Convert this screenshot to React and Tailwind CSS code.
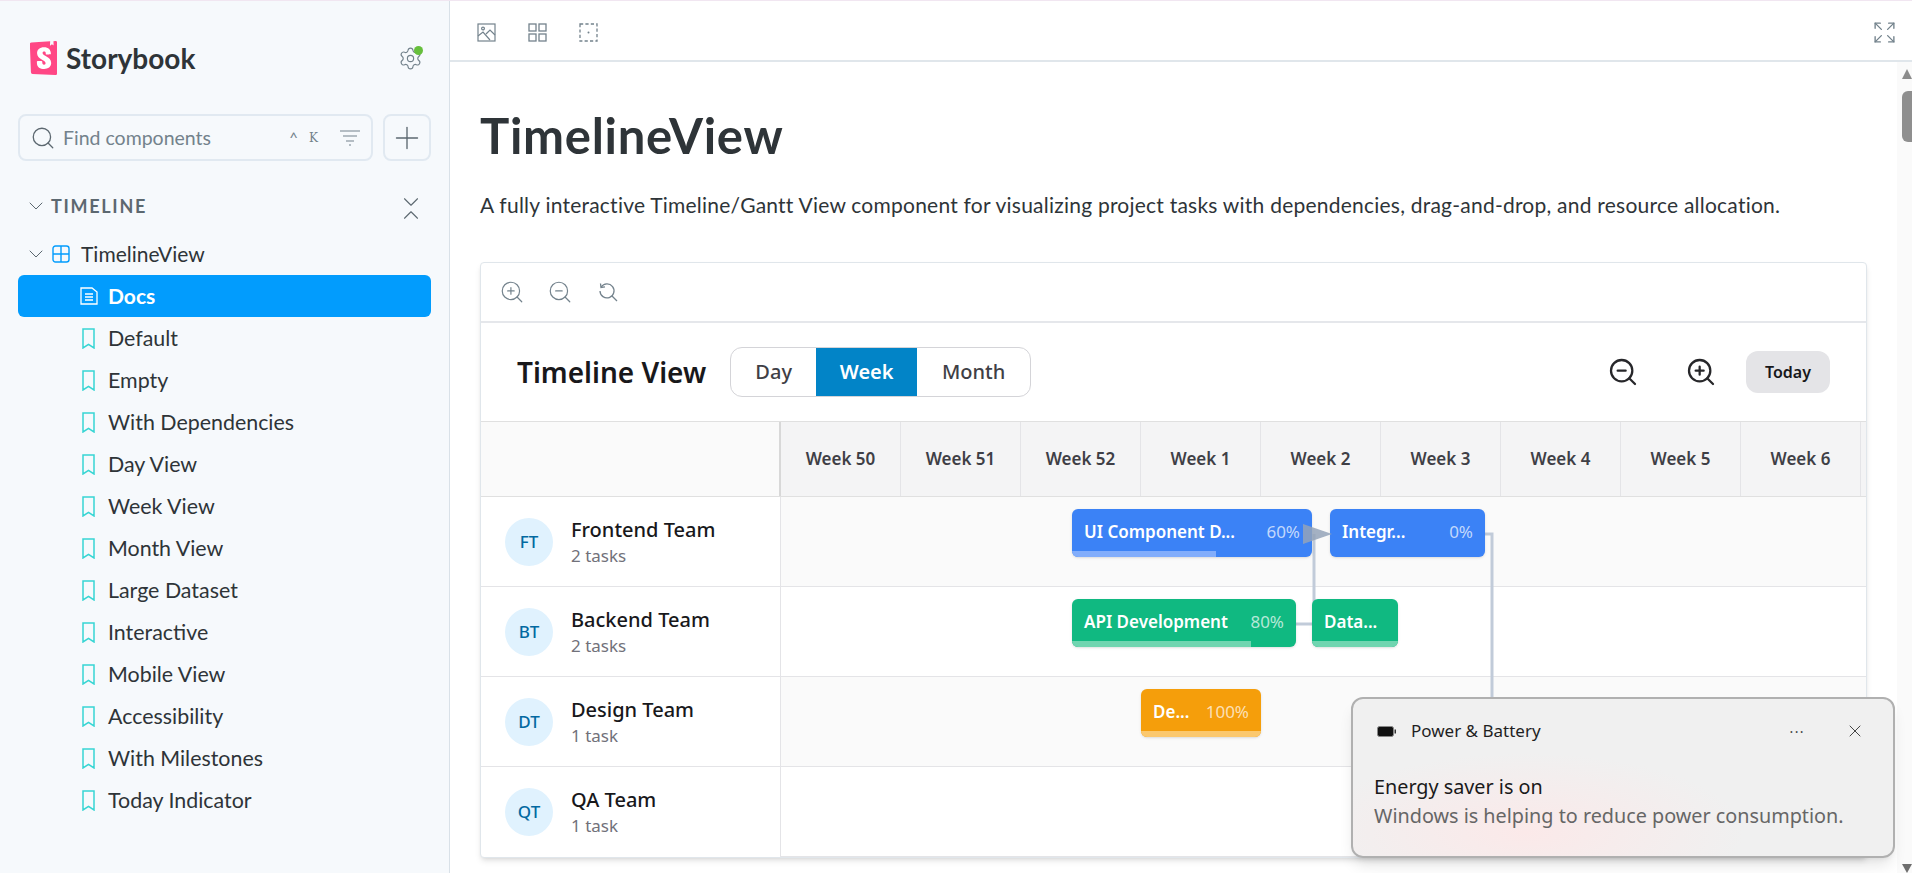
import React from 'react'
import { ChevronDown, ChevronUp, Expand, Plus, Search, Settings, X, ZoomIn, ZoomOut } from 'lucide-react'

const stories = ['Default', 'Empty', 'With Dependencies', 'Day View', 'Week View', 'Month View', 'Large Dataset', 'Interactive', 'Mobile View', 'Accessibility', 'With Milestones', 'Today Indicator']
const weeks = ['Week 50', 'Week 51', 'Week 52', 'Week 1', 'Week 2', 'Week 3', 'Week 4', 'Week 5', 'Week 6', '']

const teams = [
  { initials: 'FT', name: 'Frontend Team', tasks: '2 tasks', bg: 'bg-[#fafafa]' },
  { initials: 'BT', name: 'Backend Team', tasks: '2 tasks', bg: 'bg-white' },
  { initials: 'DT', name: 'Design Team', tasks: '1 task', bg: 'bg-[#fafafa]' },
  { initials: 'QT', name: 'QA Team', tasks: '1 task', bg: 'bg-white' },
]

const Logo = () => (
  <svg viewBox="3 0 18 24" className="w-[27px] h-[34px] shrink-0">
    <rect x="6" y="3" width="12" height="18" fill="#fff" />
    <path fill="#FF4785" d="M16.71.243l-.12 2.71a.18.18 0 00.29.15l1.06-.8.9.7a.18.18 0 00.28-.14l-.1-2.76 1.33-.1a1.2 1.2 0 011.279 1.2v21.596a1.2 1.2 0 01-1.26 1.2l-16.096-.72a1.2 1.2 0 01-1.15-1.16l-.75-19.797a1.2 1.2 0 011.13-1.27L16.7.222zM13.64 9.3c0 .47 3.16.24 3.59-.08 0-3.2-1.72-4.89-4.859-4.89-3.15 0-4.899 1.72-4.899 4.29 0 4.45 5.999 4.53 5.999 6.959 0 .7-.32 1.1-1.05 1.1-.96 0-1.35-.49-1.3-2.16 0-.36-3.649-.48-3.769 0-.27 4.03 2.23 5.2 5.099 5.2 2.79 0 4.969-1.49 4.969-4.18 0-4.77-6.099-4.64-6.099-6.999 0-.97.72-1.1 1.13-1.1.45 0 1.25.07 1.19 1.87z" />
  </svg>
)

const BookmarkIcon = () => (
  <svg viewBox="0 0 13 21" className="w-[13px] h-[21px] shrink-0" fill="none" stroke="#37d5d3" strokeWidth="1.5">
    <path d="M1 1h11v19l-5.5-3.6L1 20z" />
  </svg>
)

const DocIcon = () => (
  <svg viewBox="0 0 18 18" className="w-[18px] h-[18px] shrink-0" fill="none" stroke="#fff" strokeWidth="1.3">
    <path d="M1 1h11l5 4v12H1z" />
    <path d="M5 7h8M5 10h8M5 13h8" />
  </svg>
)

const ComponentIcon = () => (
  <svg viewBox="0 0 18 18" className="w-[18px] h-[18px] shrink-0" fill="none" stroke="#029cfd" strokeWidth="1.4">
    <rect x="1" y="1" width="16" height="16" rx="2.5" />
    <path d="M9 1v16M1 9h16" />
  </svg>
)

const FilterIcon = () => (
  <svg viewBox="0 0 20 16" className="w-[20px] h-[16px]" fill="none" stroke="#73828c" strokeWidth="1.2">
    <path d="M0 1h20M3 6h14M6 11h8M9 15h2" />
  </svg>
)

const ImageIcon = () => (
  <svg viewBox="0 0 19 19" className="w-[19px] h-[19px]" fill="none" stroke="#73828c" strokeWidth="1.2">
    <rect x="1" y="1" width="17" height="17" />
    <circle cx="6" cy="5.5" r="1.4" />
    <path d="M1 13l5-4 7 8M9 11l4-4 5 5" />
  </svg>
)

const GridIcon = () => (
  <svg viewBox="0 0 19 19" className="w-[19px] h-[19px]" fill="none" stroke="#73828c" strokeWidth="1.3">
    <rect x="1" y="1" width="7" height="7" />
    <rect x="11" y="1" width="7" height="7" />
    <rect x="1" y="11" width="7" height="7" />
    <rect x="11" y="11" width="7" height="7" />
  </svg>
)

const OutlineIcon = () => (
  <svg viewBox="0 0 19 19" className="w-[19px] h-[19px]" fill="none" stroke="#73828c" strokeWidth="1.3">
    <rect x="1" y="1" width="17" height="17" strokeDasharray="3.2 2.2" />
    <circle cx="9.5" cy="9.5" r="1" fill="#73828c" stroke="none" />
  </svg>
)

const ResetIcon = () => (
  <svg viewBox="-3 -3 26 26" className="w-[26px] h-[26px]" fill="none" stroke="#73828c" strokeWidth="1.3">
    <path d="M3.2 5A7 7 0 1 1 2 9" />
    <path d="M2.5 1.5l.5 4 4-.6M14 14l5 5" />
  </svg>
)

const BatteryIcon = () => (
  <svg viewBox="0 0 20 11" className="w-[20px] h-[11px]">
    <rect x="0.5" y="0.5" width="16" height="10" rx="2" fill="#111" stroke="#888" />
    <rect x="17.5" y="3.5" width="1.5" height="4" fill="#333" />
  </svg>
)

const Sidebar = () => (
  <aside className="w-[450px] h-full shrink-0 bg-[#f6f9fc] border-r border-[#d9e1e8] px-[18px] pt-[40px] font-['Lato',sans-serif]">
    <div className="flex items-center h-[34px] pl-[12px]">
      <Logo />
      <span className="ml-[9px] font-bold text-[28px] text-[#2e3438]">Storybook</span>
      <div className="relative ml-auto mr-[8px] w-[25px] h-[25px]">
        <Settings size={25} strokeWidth={1.1} className="text-[#73828c]" />
        <span className="absolute top-0 left-[16px] w-[9px] h-[9px] rounded-full bg-[#66bf3c]" />
      </div>
    </div>

    <div className="flex gap-[10px] mt-[39px]">
      <div className="flex items-center w-[355px] h-[47px] pl-[10px] pr-[11px] rounded-lg border-2 border-[#e1e9f1]">
        <Search size={26} strokeWidth={1.2} className="text-[#5c6870]" />
        <span className="ml-[7px] text-[19.5px] text-[#73828c]">Find components</span>
        <span className="ml-auto text-[15px] text-[#73828c]">^</span>
        <span className="ml-[11px] font-['DejaVu_Serif',serif] text-[12px] text-[#73828c]">K</span>
        <span className="ml-[22px]"><FilterIcon /></span>
      </div>
      <div className="flex items-center justify-center w-[48px] h-[47px] rounded-lg border-2 border-[#e1e9f1]">
        <Plus size={36} strokeWidth={0.9} className="text-[#5c6870]" />
      </div>
    </div>

    <div className="flex items-center h-[28px] mt-[31px] pl-[6px]">
      <ChevronDown size={24} strokeWidth={1} className="text-[#5c6870]" />
      <span className="ml-[3px] font-bold text-[18px] tracking-[1.7px] text-[#5c6870]">TIMELINE</span>
      <div className="ml-auto mt-[5px] mr-[7px] flex flex-col -space-y-[13px] text-[#5c6870]">
        <ChevronDown size={26} strokeWidth={1} />
        <ChevronUp size={26} strokeWidth={1} />
      </div>
    </div>

    <div className="flex items-center h-[42px] mt-[13px] pl-[6px]">
      <ChevronDown size={24} strokeWidth={1} className="text-[#5c6870]" />
      <span className="ml-[4px]"><ComponentIcon /></span>
      <span className="ml-[11px] text-[21px] text-[#2e3438]">TimelineView</span>
    </div>

    <div className="flex items-center h-[42px] pl-[62px] rounded-md bg-[#029cfd]">
      <DocIcon />
      <span className="ml-[10px] font-bold text-[21px] text-white">Docs</span>
    </div>

    {stories.map((story) => (
      <div key={story} className="flex items-center h-[42px] pl-[64px]">
        <BookmarkIcon />
        <span className="ml-[13px] text-[21.4px] text-[#2e3438]">{story}</span>
      </div>
    ))}
  </aside>
)

const Bar = ({ left, width, top, color, fill, label, percent, progress }) => (
  <div className={`absolute z-10 h-[48px] rounded-md overflow-hidden flex items-center justify-between px-[12px] pb-[2px] text-[17px] shadow-sm ${color}`} style={{ left, width, top }}>
    <span className="font-semibold text-white whitespace-nowrap">{label}</span>
    <span className="text-white/70">{percent}</span>
    <div className={`absolute left-0 bottom-0 h-[6px] ${fill}`} style={{ width: progress }} />
  </div>
)

const Connectors = () => (
  <>
    <svg className="absolute left-0 top-0 z-0 w-[1086px] h-[360px] pointer-events-none" fill="none" stroke="#c1cbd9" strokeWidth="3">
      <path d="M515 127 L533 127 L533 37" />
      <path d="M704 37 L711 37 L711 360" />
    </svg>
    <svg className="absolute left-[521px] top-[26px] z-20 w-[30px] h-[22px] pointer-events-none">
      <path d="M1 1 L30 11 L1 21z" fill="#94a3b8" fillOpacity="0.85" />
    </svg>
  </>
)

const Timeline = () => (
  <div className="border-t-2 border-[#e5e7eb] font-['Noto_Sans',sans-serif]">
    <div className="flex items-center h-[98px] pl-[36px] pr-[36px]">
      <span className="text-[28px] font-semibold text-[#18181b]">Timeline View</span>
      <div className="flex ml-[24px] h-[50px] rounded-xl border border-[#d4d4d8] overflow-hidden text-[20px] font-medium text-[#3f3f46]">
        <div className="flex items-center justify-center w-[85px]">Day</div>
        <div className="flex items-center justify-center w-[101px] bg-[#0284c7] font-semibold text-white">Week</div>
        <div className="flex items-center justify-center w-[113px]">Month</div>
      </div>
      <ZoomOut size={32} strokeWidth={1.7} className="ml-auto text-[#27272a]" />
      <ZoomIn size={32} strokeWidth={1.7} className="ml-[46px] text-[#27272a]" />
      <div className="flex items-center justify-center ml-[29px] w-[84px] h-[42px] rounded-xl bg-[#e4e4e7] text-[16px] font-semibold text-[#18181b]">Today</div>
    </div>

    <div className="flex h-[76px] border-y border-[#e0e0e0] overflow-hidden">
      <div className="w-[300px] shrink-0 bg-[#fafafa] border-r-2 border-[#d8d8d8]" />
      {weeks.map((week, i) => (
        <div key={i} className="flex items-center justify-center w-[120px] shrink-0 bg-[#f4f4f5] border-r border-[#e4e4e7] text-[17px] font-semibold text-[#3f3f46]">{week}</div>
      ))}
    </div>

    <div className="flex">
      <div className="w-[300px] shrink-0 border-r border-[#e4e4e7]">
        {teams.map((team) => (
          <div key={team.name} className="flex items-center h-[90px] pl-[24px] border-b border-[#e4e4e7] last:border-b-0">
            <div className="flex items-center justify-center w-[48px] h-[48px] rounded-full bg-[#e0f2fe] text-[17px] font-medium text-[#0369a1]">{team.initials}</div>
            <div className="ml-[18px]">
              <div className="text-[20px] font-medium leading-[28px] text-[#18181b]">{team.name}</div>
              <div className="text-[17px] leading-[24px] text-[#71717a]">{team.tasks}</div>
            </div>
          </div>
        ))}
      </div>
      <div className="relative flex-1">
        {teams.map((team) => (
          <div key={team.name} className={`h-[90px] border-b border-[#e4e4e7] last:border-b-0 ${team.bg}`} />
        ))}
        <Connectors />
        <Bar left={291} width={240} top={12} color="bg-[#3b82f6]" fill="bg-[#82adfb]" label="UI Component D..." percent="60%" progress={144} />
        <Bar left={549} width={155} top={12} color="bg-[#3b82f6]" fill="bg-[#82adfb]" label="Integr..." percent="0%" progress={0} />
        <Bar left={291} width={224} top={102} color="bg-[#10b981]" fill="bg-[#70d5b0]" label="API Development" percent="80%" progress={179} />
        <Bar left={531} width={86} top={102} color="bg-[#10b981]" fill="bg-[#70d5b0]" label="Data..." percent="" progress={86} />
        <Bar left={360} width={120} top={192} color="bg-[#f59e0b]" fill="bg-[#fbc86e]" label="De..." percent="100%" progress={120} />
      </div>
    </div>
  </div>
)

const Main = () => (
  <main className="flex-1 min-w-0 h-full flex flex-col">
    <div className="flex items-center h-[61px] shrink-0 pt-[3px] pl-[27px] pr-[15px] gap-[32px] border-b-2 border-[#e0e6eb]">
      <ImageIcon />
      <GridIcon />
      <OutlineIcon />
      <Expand size={25} strokeWidth={1.3} className="ml-auto text-[#73828c]" />
    </div>
    <div className="flex flex-1 min-h-0">
      <div className="flex-1 min-w-0 px-[30px] overflow-hidden font-['Lato',sans-serif]">
        <h1 className="mt-[45px] font-bold text-[49px] tracking-[0.7px] leading-[56px] text-[#2e3438]">TimelineView</h1>
        <p className="mt-[28px] text-[21px] tracking-[0.23px] leading-[28px] text-[#2e3438]">A fully interactive Timeline/Gantt View component for visualizing project tasks with dependencies, drag-and-drop, and resource allocation.</p>
        <div className="mt-[43px] rounded border border-[#e0e6eb] shadow-md bg-white">
          <div className="flex items-center h-[58px] pl-[18px] gap-[22px]">
            <ZoomIn size={26} strokeWidth={1.1} className="text-[#73828c]" />
            <ZoomOut size={26} strokeWidth={1.1} className="text-[#73828c]" />
            <ResetIcon />
          </div>
          <Timeline />
        </div>
      </div>
      <div className="flex flex-col items-end justify-between w-[15px] shrink-0 pt-[7px] bg-[#fafafa]">
        <div className="flex flex-col items-end">
          <div className="w-0 h-0 border-l-[5px] border-r-[5px] border-b-[10px] border-l-transparent border-r-transparent border-b-[#8c8c8c]" />
          <div className="mt-[12px] w-[10px] h-[51px] rounded-l-md bg-[#8f8f8f]" />
        </div>
        <div className="w-0 h-0 border-l-[5px] border-r-[5px] border-t-[9px] border-l-transparent border-r-transparent border-t-[#6e6e6e]" />
      </div>
    </div>
  </main>
)

const Toast = () => (
  <div className="absolute left-[1351px] top-[696px] z-30 w-[544px] h-[161px] rounded-xl border-2 border-[#b0b0b0] bg-[radial-gradient(ellipse_at_32%_85%,#fbe9e9_0%,#f0f0f0_42%)] shadow-lg font-['Noto_Sans',sans-serif]">
    <div className="flex items-center h-[64px] pl-[24px] pr-[28px]">
      <BatteryIcon />
      <span className="ml-[14px] text-[17px] text-[#1f1f1f]">Power &amp; Battery</span>
      <span className="ml-auto text-[14px] tracking-[0.1em] text-[#444]">···</span>
      <X size={20} strokeWidth={1} className="ml-[40px] text-[#222]" />
    </div>
    <div className="pl-[21px] pt-[9px]">
      <div className="text-[19.8px] leading-[29px] text-[#1a1a1a]">Energy saver is on</div>
      <div className="text-[19.8px] leading-[29px] text-[#666]">Windows is helping to reduce power consumption.</div>
    </div>
  </div>
)

const App = () => (
  <div className="relative flex w-[1912px] h-[873px] overflow-hidden bg-white border-t border-[#f1e6f1]">
    <Sidebar />
    <Main />
    <Toast />
  </div>
)

export default App
